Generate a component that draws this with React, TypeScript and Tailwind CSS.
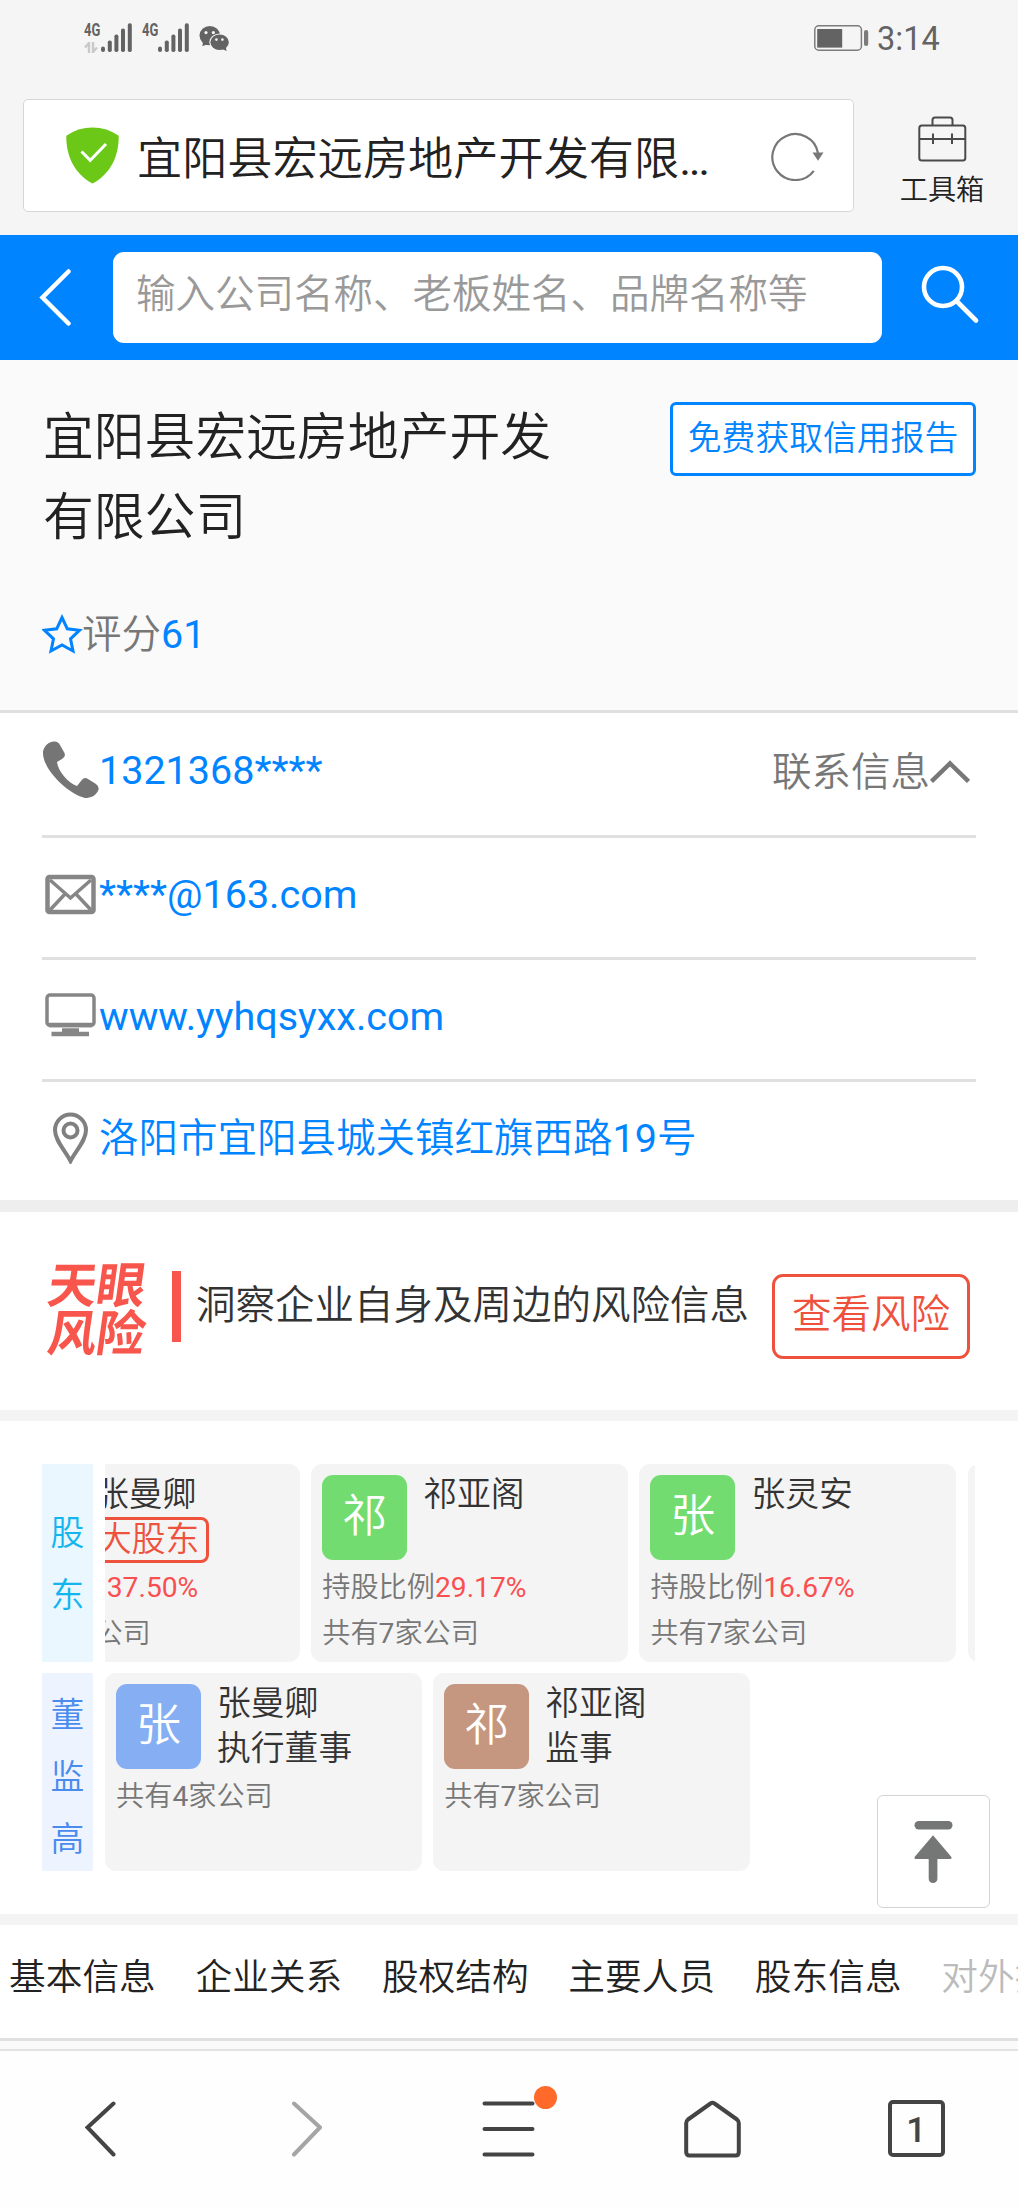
import type { ReactNode } from "react";

type Person = {
  name: string;
  avatar: string;
  color: string;
  title?: string;
  tag?: string;
  percent?: string;
  companies: number;
};

const shareholders: Person[] = [
  { name: "张曼卿", avatar: "张", color: "bg-[#85aff2]", tag: "大股东", percent: "37.50%", companies: 4 },
  { name: "祁亚阁", avatar: "祁", color: "bg-[#72dc70]", percent: "29.17%", companies: 7 },
  { name: "张灵安", avatar: "张", color: "bg-[#72dc70]", percent: "16.67%", companies: 7 },
];

const managers: Person[] = [
  { name: "张曼卿", avatar: "张", color: "bg-[#85aff2]", title: "执行董事", companies: 4 },
  { name: "祁亚阁", avatar: "祁", color: "bg-[#c59780]", title: "监事", companies: 7 },
];

const tabs = ["基本信息", "企业关系", "股权结构", "主要人员", "股东信息"];

function Bars() {
  return (
    <svg width="31" height="30" viewBox="0 0 31 30" fill="#636363">
      <rect x="0" y="23.5" width="4" height="5.5" rx="2" />
      <rect x="6.8" y="17.5" width="4" height="11.5" rx="1.8" />
      <rect x="13.4" y="11.5" width="4" height="17.5" rx="1.8" />
      <rect x="20" y="5.5" width="4" height="23.5" rx="1.8" />
      <rect x="26.8" y="0.3" width="4" height="28.7" rx="1.8" />
    </svg>
  );
}

function StatusBar() {
  return (
    <div className="flex h-[75px] items-start text-[#636363]">
      <div className="ml-[84px] mt-[23px] flex">
        <div className="w-[17px]">
          <div className="h-[19px] w-6 origin-left scale-x-[0.7] text-[18.5px] leading-[15px] font-bold">4G</div>
          <svg width="15" height="11" viewBox="0 0 15 11" fill="none" stroke="#c9c9c9" strokeWidth="2.4">
            <path d="M5 11V1L1 5.5M9 0v10l4-4.5" />
          </svg>
        </div>
        <Bars />
      </div>
      <div className="ml-[10px] mt-[23px] flex">
        <div className="w-[16px]">
          <div className="w-6 origin-left scale-x-[0.7] text-[18.5px] leading-[15px] font-bold">4G</div>
        </div>
        <Bars />
      </div>
      <svg className="ml-[10px] mt-[25px]" width="31" height="27" viewBox="0 0 31 27">
        <ellipse cx="10.8" cy="10.6" rx="10.3" ry="9.6" fill="#636363" />
        <path d="M4 17l-.6 4.2 5-2z" fill="#636363" />
        <ellipse cx="20.6" cy="17.3" rx="10.3" ry="8.9" fill="#f5f5f5" />
        <ellipse cx="20.6" cy="17.3" rx="9.2" ry="7.8" fill="#636363" />
        <path d="M23 24l4.6 2-.8-4z" fill="#636363" />
        <g fill="#f5f5f5">
          <circle cx="7" cy="7.6" r="1.6" />
          <circle cx="14.4" cy="7.6" r="1.6" />
          <circle cx="17.4" cy="14.6" r="1.3" />
          <circle cx="23.4" cy="14.6" r="1.3" />
        </g>
      </svg>
      <svg className="ml-auto mt-[25px]" width="55" height="27" viewBox="0 0 55 27">
        <rect x="0.8" y="0.8" width="46.6" height="24.4" rx="4" fill="none" stroke="#7c7c7c" strokeWidth="1.5" />
        <rect x="3.2" y="4" width="25" height="18.6" fill="#636363" />
        <rect x="50" y="5" width="4.2" height="16" rx="2" fill="#7c7c7c" />
      </svg>
      <span className="ml-[8px] mr-[77px] mt-[20px] w-[64px] text-[32.5px] leading-[38px] font-normal">3:14</span>
    </div>
  );
}

function AddressBar() {
  return (
    <div className="flex h-[160px] pt-[24px]">
      <div className="ml-[23px] flex h-[113px] w-[831px] items-center rounded-[5px] border border-[#d6d6d6] bg-white">
        <svg className="ml-[42px] shrink-0" width="53" height="57" viewBox="0 0 53 57">
          <path d="M0.3 8.7Q12 0.4 26.5 0.4T52.7 8.7C53 30 44 47 26.5 56.6C9 47 0 30 0.3 8.7Z" fill="#6bc817" />
          <path d="M15.5 24.5l8.7 8.8L40 17" fill="none" stroke="#fff" strokeWidth="3" />
        </svg>
        <span className="ml-[18px] pt-[8px] text-[45.2px] leading-[60px] whitespace-nowrap text-[#222]">
          宜阳县宏远房地产开发有限<span className="font-normal tracking-[-2.4px]">...</span>
        </span>
        <svg className="ml-auto mr-[29px]" width="53" height="50" viewBox="0 0 53 50">
          <path d="M42.8 39.8A23 23 0 1 1 47 22" fill="none" stroke="#777" strokeWidth="2.2" />
          <path d="M41.5 21.5h11l-5.5 8.2z" fill="#777" />
        </svg>
      </div>
      <div className="ml-[46px] flex w-[84px] flex-col items-center pt-[17px]">
        <svg width="49" height="46" viewBox="0 0 49 46" fill="none" stroke="#4a4a4a" strokeWidth="2">
          <rect x="1.3" y="9.5" width="46" height="35" rx="2.5" />
          <path d="M14.5 9.5V4a2.5 2.5 0 0 1 2.5-2.5H32a2.5 2.5 0 0 1 2.5 2.5v5.5M1.3 23H47.3M15 17.5v10.5M34 17.5v10.5" />
        </svg>
        <span className="mt-[9px] text-[28.2px] leading-[40px] whitespace-nowrap text-[#222]">工具箱</span>
      </div>
    </div>
  );
}

function SearchBar() {
  return (
    <div className="flex h-[125px] items-center bg-[#0084ff]">
      <svg className="ml-[39px]" width="33" height="58" viewBox="0 0 33 58" fill="none" stroke="#fff" strokeWidth="4.5" strokeLinecap="round">
        <path d="M29.5 2.5L3.5 28.5L29.5 54.5" />
      </svg>
      <div className="ml-[41px] flex h-[91px] w-[769px] items-center rounded-[11px] bg-white pb-[5px] pl-[23px]">
        <span className="text-[39.5px] leading-[56px] whitespace-nowrap text-[#999]">输入公司名称、老板姓名、品牌名称等</span>
      </div>
      <svg className="mb-[5px] ml-[39px]" width="60" height="60" viewBox="0 0 60 60" fill="none" stroke="#fff" strokeWidth="4.6">
        <circle cx="22" cy="22" r="19" />
        <path d="M36.5 37L55 55.5" strokeLinecap="round" />
      </svg>
    </div>
  );
}

function CompanyHeader() {
  return (
    <div className="h-[353px] border-b-[3px] border-[#e0e0e0] bg-[#fafafa] px-[42px] pt-[38px]">
      <div className="flex items-start justify-between">
        <h1 className="ml-[1px] w-[520px] text-[50.8px] leading-[79.5px] text-[#222]">宜阳县宏远房地产开发有限公司</h1>
        <button className="mt-[4px] h-[74px] w-[306px] rounded-[6px] border-3 border-[#0084ff] bg-white text-[33.8px] whitespace-nowrap text-[#0084ff]">
          免费获取信用报告
        </button>
      </div>
      <div className="mt-[50px] flex items-center text-[39.5px] leading-[56px] text-[#777]">
        <svg className="-mt-[2px] -mr-[1px]" width="41" height="40" viewBox="0 0 41 40" fill="none" stroke="#0084ff" strokeWidth="3">
          <path d="M20 3.5L25.3 14.8L37.5 16.3L28.5 24.8L31 37L20 31L9 37L11.5 24.8L2.5 16.3L14.7 14.8Z" />
        </svg>
        评分<span className="font-normal text-[#0084ff]">61</span>
      </div>
    </div>
  );
}

type ContactRowProps = {
  icon: ReactNode;
  text: ReactNode;
  className: string;
  children?: ReactNode;
};

function ContactRow({ icon, text, className, children }: ContactRowProps) {
  return (
    <div className={`flex items-center border-[#e0e0e0] pb-[5px] ${className}`}>
      <div className="flex w-[57px] items-center">{icon}</div>
      <span className="text-[39.5px] leading-[56px] whitespace-nowrap text-[#0084ff]">{text}</span>
      {children}
    </div>
  );
}

function Contacts() {
  return (
    <div className="h-[487px] px-[42px]">
      <ContactRow
        className="h-[125px] border-b-3"
        text={<span className="mb-px block font-normal">1321368****</span>}
        icon={
          <svg className="mb-[5px]" width="57" height="58" viewBox="0 0 57 58" fill="#757575">
            <path d="M1 12C2 6 6 2 12 1.5Q16 1 18 5L22.5 13Q24 17 20 19L15 22C16 31 26 43 35 46L39 41Q42 36 46 39L54 44Q58 47 56 51C53 56 49 58 43 58C24 53 0 28 1 12Z" />
          </svg>
        }
      >
        <span className="ml-auto pt-[2px] text-[39.5px] leading-[56px] whitespace-nowrap text-[#777]">联系信息</span>
        <svg className="mr-[6px]" width="40" height="24" viewBox="0 0 40 24" fill="none" stroke="#777" strokeWidth="4.5">
          <path d="M1.5 21.5L20 3.5L38.5 21.5" />
        </svg>
      </ContactRow>
      <ContactRow
        className="h-[122px] border-b-3"
        text={<span className="font-normal">****@163.com</span>}
        icon={
          <svg className="ml-[3px]" width="52" height="42" viewBox="0 0 52 42" fill="none" stroke="#868686" strokeWidth="4.5">
            <rect x="2.5" y="3" width="46" height="35" rx="2" />
            <path d="M5 6L25.5 24L46 6M5 36L20 20M46 36L31 20" strokeWidth="3.5" />
          </svg>
        }
      />
      <ContactRow
        className="h-[122px] border-b-3"
        text={<span className="font-normal">www.yyhqsyxx.com</span>}
        icon={
          <svg className="mb-[4px] ml-[3px]" width="52" height="44" viewBox="0 0 52 44" fill="none" stroke="#868686">
            <rect x="2" y="2" width="47" height="30.5" rx="3" strokeWidth="3.5" />
            <path d="M4 32H47" strokeWidth="4.5" />
            <path d="M6.5 41H44M17 37.5H34" strokeWidth="4.5" />
          </svg>
        }
      />
      <ContactRow
        className="h-[118px]"
        text={
          <>
            洛阳市宜阳县城关镇红旗西路<span className="font-normal">19</span>号
          </>
        }
        icon={
          <svg className="mb-[2px] ml-[10px]" width="38" height="52" viewBox="0 0 38 52" fill="none" stroke="#808080" strokeWidth="4">
            <path d="M18.5 49C13 38 3 29 3 18A15.5 15.5 0 0 1 34 18C34 29 24 38 18.5 49Z" />
            <circle cx="18.5" cy="18.5" r="7" />
          </svg>
        }
      />
    </div>
  );
}

function RiskBanner() {
  return (
    <div className="flex h-[198px] items-start">
      <div className="ml-[48px] mt-[51px] w-[100px] text-[49px] leading-[48px] font-bold tracking-[-0.5px] whitespace-nowrap text-[#f8554c]">
        <div className="-skew-x-[8deg]">天眼</div>
        <div className="-skew-x-[8deg]">风险</div>
      </div>
      <div className="ml-[24px] mt-[59px] h-[71px] w-[9px] bg-[#f8554c]" />
      <span className="ml-[15px] mt-[66px] text-[39.5px] leading-[56px] whitespace-nowrap text-[#333]">洞察企业自身及周边的风险信息</span>
      <button className="ml-[23px] mt-[62px] h-[85px] w-[198px] rounded-[11px] border-3 border-[#ee523d] pb-[4px] text-[39.5px] leading-[56px] text-[#ee523d]">
        查看风险
      </button>
    </div>
  );
}

function PersonCard({ person }: { person: Person }) {
  return (
    <div className="h-[198px] w-[316.5px] shrink-0 rounded-[11px] bg-[#f4f4f4] p-[11px]">
      <div className="flex h-[85px]">
        <div className={`${person.color} h-[85px] w-[85px] rounded-[11px] text-center text-[45px] leading-[83px] text-white`}>{person.avatar}</div>
        <div className="-mt-[3px] ml-[16px] text-[33.8px] leading-[45px] whitespace-nowrap text-[#333]">
          <div>{person.name}</div>
          {person.title && <div>{person.title}</div>}
          {person.tag && (
            <div className="h-[46px] rounded-[8px] border-3 border-[#ee523d] pr-[7px] leading-[40px] text-[#ee523d]">{person.tag}</div>
          )}
        </div>
      </div>
      <div className="mt-[5px] text-[28.2px] leading-[45.5px] whitespace-nowrap text-[#777]">
        {person.percent && (
          <div>
            持股比例<span className="font-normal text-[#fa4f50]">{person.percent}</span>
          </div>
        )}
        <div>
          共有<span className="font-normal">{person.companies}</span>家公司
        </div>
      </div>
    </div>
  );
}

function PeoplePanel() {
  return (
    <div className="relative h-[493px] px-[42px] pt-[43px]">
      <div className="flex h-[198px]">
        <div className="flex w-[51px] flex-col items-center justify-center bg-[#eaf7ff] pt-[4px] text-[33.8px] leading-[62px] text-[#12b5ee]">
          <span>股</span>
          <span>东</span>
        </div>
        <div className="ml-[12px] flex w-[870px] overflow-hidden">
          <div className="-ml-[122px] flex gap-[11.7px]">
            {shareholders.map((person) => (
              <PersonCard key={person.name} person={person} />
            ))}
            <div className="h-[198px] w-[316px] shrink-0 rounded-[11px] bg-[#f4f4f4]" />
          </div>
        </div>
      </div>
      <div className="mt-[11px] flex h-[198px]">
        <div className="flex w-[51px] flex-col items-center bg-[#edf4ff] pt-[12px] text-[33.8px] leading-[62px] text-[#4a8bee]">
          <span>董</span>
          <span>监</span>
          <span>高</span>
        </div>
        <div className="ml-[12px] flex gap-[11.7px]">
          {managers.map((person) => (
            <PersonCard key={person.name} person={person} />
          ))}
        </div>
      </div>
      {/* back to top, floats over the panel */}
      <button className="absolute top-[374px] right-[28px] flex h-[113px] w-[113px] items-center justify-center rounded-[6px] border-[1.5px] border-[#d4d4d4] bg-white">
        <svg width="39" height="62" viewBox="0 0 39 62" fill="#757776">
          <rect x="0.5" y="0" width="38" height="8.5" rx="4.2" />
          <path d="M19 14.3L37 35.5Q38.5 38 36 38H2Q-0.5 38 1 35.5Z" />
          <rect x="14.7" y="34" width="8.7" height="28" rx="4.3" />
        </svg>
      </button>
    </div>
  );
}

function TabStrip() {
  return (
    <div className="flex h-[116px] gap-[39.7px] overflow-hidden border-b-3 border-[#e0e0e0] pt-[25px] pl-[9px] text-[36.7px] leading-[56px] whitespace-nowrap text-[#222]">
      {tabs.map((tab) => (
        <span key={tab}>{tab}</span>
      ))}
      <span className="text-[#bbb]">对外投资</span>
    </div>
  );
}

function NavItem({ children }: { children: ReactNode }) {
  return <div className="flex flex-1 justify-center">{children}</div>;
}

function BottomNav() {
  return (
    <div className="flex h-[159px] border-t-2 border-[#e2e2e2] bg-[#fefefe] pt-[45px] text-[#444]">
      <NavItem>
        <svg width="33" height="66" viewBox="0 0 33 66" fill="none" stroke="currentColor" strokeWidth="4" strokeLinecap="round">
          <path d="M28.5 7.5L2.5 31.5L28.5 58.5" />
        </svg>
      </NavItem>
      <NavItem>
        <svg width="33" height="66" viewBox="0 0 33 66" fill="none" stroke="#a5a5a5" strokeWidth="4" strokeLinecap="round">
          <path d="M5 7.5L31 31.5L5 58.5" />
        </svg>
      </NavItem>
      <NavItem>
        <div className="relative">
          <svg width="53" height="66" viewBox="0 0 53 66" fill="none" stroke="currentColor" strokeWidth="4" strokeLinecap="round">
            <path d="M2.5 7.5H50.5M2.5 33H50.5M2.5 58.5H50.5" />
          </svg>
          <span className="absolute -top-[10px] -right-[22px] h-[23px] w-[23px] rounded-full bg-[#ff6a2b]" />
        </div>
      </NavItem>
      <NavItem>
        <svg width="57" height="66" viewBox="0 0 57 66" fill="none" stroke="currentColor" strokeWidth="4" strokeLinejoin="round">
          <path d="M2.2 27Q2.2 25 4 23.5L26.5 7.5Q28.5 6 30.5 7.5L53 23.5Q54.8 25 54.8 27V56Q54.8 59.500 51.5 59.5H5.5Q2.2 59.5 2.2 56Z" />
        </svg>
      </NavItem>
      <NavItem>
        <div className="mt-[4px] flex h-[57px] w-[57px] items-center justify-center rounded-[5px] border-4 border-[#444] pt-[3px] font-['Roboto',sans-serif] text-[35px] leading-none font-medium">1</div>
      </NavItem>
    </div>
  );
}

export default function App() {
  return (
    <div className="h-[2208px] w-[1018px] overflow-hidden bg-white font-['Roboto','Noto_Sans_CJK_SC',sans-serif] font-[350]">
      <div className="bg-[#f5f5f5]">
        <StatusBar />
        <AddressBar />
      </div>
      <SearchBar />
      <CompanyHeader />
      <Contacts />
      <div className="h-[12px] bg-[#eee]" />
      <RiskBanner />
      <div className="h-[11px] bg-[#f4f4f4]" />
      <PeoplePanel />
      <div className="h-[11px] bg-[#f4f4f4]" />
      <TabStrip />
      <div className="h-[8px] bg-[#fafafa]" />
      <BottomNav />
    </div>
  );
}
